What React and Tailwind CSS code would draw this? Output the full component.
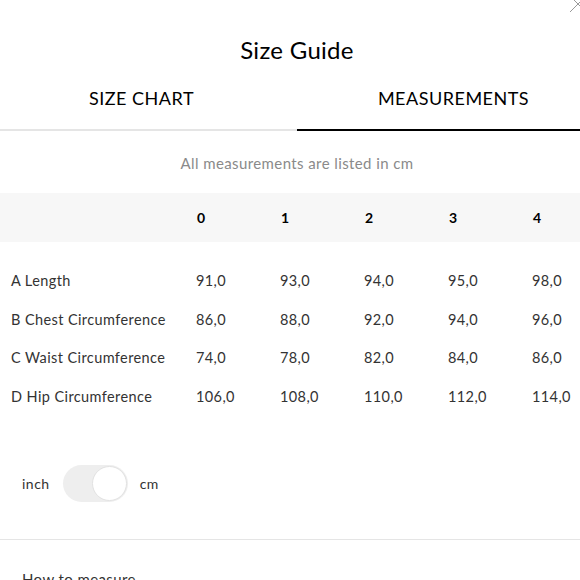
import React, { useState } from 'react';

const sizes = ['0', '1', '2', '3', '4'];

const rows = [
  { label: 'A Length', values: ['91,0', '93,0', '94,0', '95,0', '98,0'] },
  { label: 'B Chest Circumference', values: ['86,0', '88,0', '92,0', '94,0', '96,0'] },
  { label: 'C Waist Circumference', values: ['74,0', '78,0', '82,0', '84,0', '86,0'] },
  { label: 'D Hip Circumference', values: ['106,0', '108,0', '110,0', '112,0', '114,0'] },
];

function App() {
  const [tab, setTab] = useState('measurements');
  const [metric, setMetric] = useState(true);

  return (
    <div className="w-[580px] h-[580px] overflow-hidden bg-white text-[#333] font-['Lato',sans-serif]">
      <div className="w-[594px] relative">
        {/* Close */}
        <button className="absolute top-[-6px] right-[6px] w-5 h-5">
          <svg viewBox="0 0 20 20" className="w-5 h-5" fill="none" stroke="#999" strokeWidth="1">
            <path d="M2 2l16 16M18 2L2 18" />
          </svg>
        </button>

        <h1 className="pt-[36px] text-center text-[24px] text-black leading-[28px] tracking-[0.3px]">Size Guide</h1>

        {/* Tabs */}
        <div className="grid grid-cols-2 mt-[20px]">
          <button
            onClick={() => setTab('chart')}
            className={`h-[47px] pt-[2px] flex justify-center items-start leading-[24px] text-[18px] tracking-[0.5px] text-black border-b-2 ${tab === 'chart' ? 'border-black' : 'border-[#e5e5e5]'}`}
          >
            <span className="relative left-[-7px]">SIZE CHART</span>
          </button>
          <button
            onClick={() => setTab('measurements')}
            className={`h-[47px] pt-[2px] flex justify-center items-start leading-[24px] text-[18px] tracking-[0.5px] text-black border-b-2 ${tab === 'measurements' ? 'border-black' : 'border-[#e5e5e5]'}`}
          >
            <span className="relative left-[8px]">MEASUREMENTS</span>
          </button>
        </div>

        <p className="mt-[22px] text-center text-[15px] text-[#8a8a8a] tracking-[0.4px] leading-[20px]">All measurements are listed in cm</p>

        {/* Table */}
        <div className="mt-[20px]">
          <div className="flex items-center h-[49px] bg-[#f7f7f7] pl-[11px]">
            <div className="w-[185px] shrink-0" />
            {sizes.map((s) => (
              <div key={s} className="w-[84px] shrink-0 pl-[1px] text-[14px] font-bold text-black">{s}</div>
            ))}
          </div>
          <div className="pt-[20px] pl-[11px]">
            {rows.map((r) => (
              <div key={r.label} className="flex items-center h-[38.5px] text-[14.5px] tracking-[0.4px]">
                <div className="w-[185px] shrink-0">{r.label}</div>
                {r.values.map((v, i) => (
                  <div key={i} className="w-[84px] shrink-0">{v}</div>
                ))}
              </div>
            ))}
          </div>
        </div>

        {/* Unit toggle */}
        <div className="flex items-center mt-[49px] pl-[22px] text-[14px] tracking-[0.5px]">
          <span>inch</span>
          <button
            onClick={() => setMetric(!metric)}
            className={`ml-[13px] mr-[12px] w-[65px] h-[37px] rounded-full bg-[#eeeeee] flex items-center px-[1px] ${metric ? 'justify-end' : 'justify-start'}`}
          >
            <span className="w-[35px] h-[35px] rounded-full bg-white border border-[#e2e2e2]" />
          </button>
          <span>cm</span>
        </div>

        <div className="mt-[37px] border-t border-[#e5e5e5]" />

        <p className="mt-[28px] pl-[22px] text-[15px] text-[#333] tracking-[0.4px]">How to measure</p>
      </div>
    </div>
  );
}

export default App;
